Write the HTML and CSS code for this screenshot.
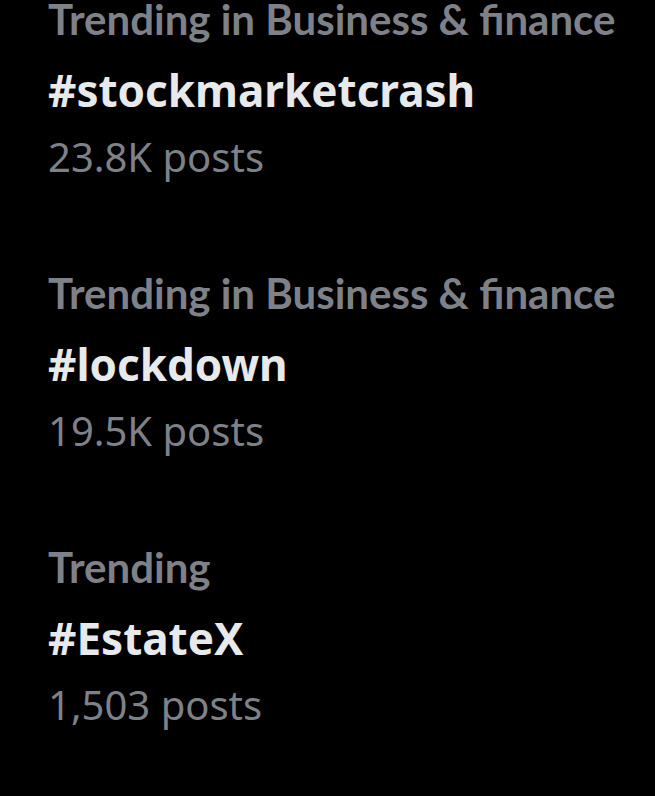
FILE: index.html
```html
<!DOCTYPE html>
<html>
<head>
<meta charset="utf-8">
<link rel="stylesheet" href="styles.css">
</head>
<body>
<div class="list">
  <div class="trend">
    <div class="meta">Trending in Business &amp; finance</div>
    <div class="tag">#stockmarketcrash</div>
    <div class="count">23.8K posts</div>
  </div>
  <div class="trend">
    <div class="meta">Trending in Business &amp; finance</div>
    <div class="tag">#lockdown</div>
    <div class="count">19.5K posts</div>
  </div>
  <div class="trend">
    <div class="meta">Trending</div>
    <div class="tag">#EstateX</div>
    <div class="count">1,503 posts</div>
  </div>
</div>
</body>
</html>
```
FILE: styles.css
```css
html, body {
  margin: 0;
  padding: 0;
  background: #000;
}
body {
  width: 655px;
  height: 796px;
  overflow: hidden;
}
.list {
  display: flex;
  flex-direction: column;
  padding: 0 0 0 48px;
}
.trend {
  display: flex;
  flex-direction: column;
  height: 274px;
}
.meta {
  font-family: "Lato", sans-serif;
  font-weight: 700;
  font-size: 42px;
  line-height: 38px;
  color: #7e8288;
}
.tag {
  font-family: "Noto Sans", sans-serif;
  font-weight: 700;
  font-size: 44px;
  line-height: 104px;
  color: #e7e9ea;
}
.count {
  font-family: "Noto Sans", sans-serif;
  font-weight: 400;
  font-size: 40px;
  line-height: 30px;
  color: #7e8288;
}
```
